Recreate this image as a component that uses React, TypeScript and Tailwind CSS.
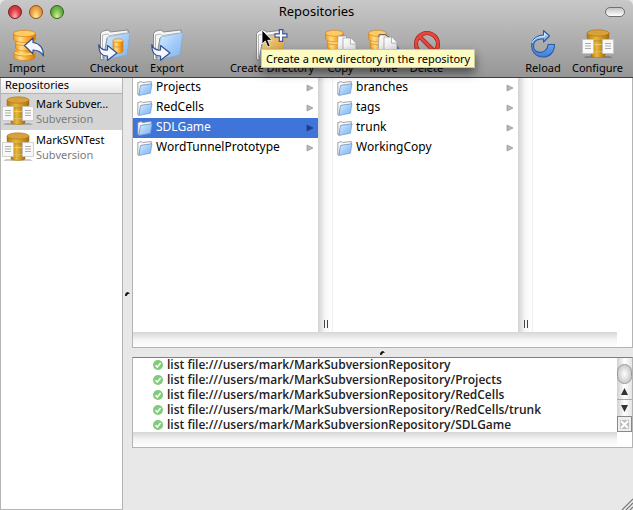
import { useState, type ReactNode } from 'react'
import clsx from 'clsx'

const repositories = [
  { name: 'Mark Subver…', kind: 'Subversion' },
  { name: 'MarkSVNTest', kind: 'Subversion' },
]

const rootFolders = ['Projects', 'RedCells', 'SDLGame', 'WordTunnelPrototype']
const subFolders = ['branches', 'tags', 'trunk', 'WorkingCopy']

const logLines = [
  'list file:///users/mark/MarkSubversionRepository',
  'list file:///users/mark/MarkSubversionRepository/Projects',
  'list file:///users/mark/MarkSubversionRepository/RedCells',
  'list file:///users/mark/MarkSubversionRepository/RedCells/trunk',
  'list file:///users/mark/MarkSubversionRepository/SDLGame',
]

// Gradients shared by all the icons
function Gradients() {
  return (
    <svg className="absolute size-0" aria-hidden="true">
      <defs>
        <linearGradient id="gold">
          <stop offset="0" stopColor="#f39a1c" />
          <stop offset=".3" stopColor="#ffe08a" />
          <stop offset=".6" stopColor="#fbb034" />
          <stop offset="1" stopColor="#d97706" />
        </linearGradient>
        <linearGradient id="brass">
          <stop offset="0" stopColor="#b47a10" />
          <stop offset=".4" stopColor="#e6b93a" />
          <stop offset=".65" stopColor="#d09a28" />
          <stop offset="1" stopColor="#a86c0c" />
        </linearGradient>
        <linearGradient id="sky" x1="0" y1="0" x2="1" y2="1">
          <stop offset="0" stopColor="#dcefff" />
          <stop offset=".5" stopColor="#a4cdf8" />
          <stop offset="1" stopColor="#7fb2ee" />
        </linearGradient>
        <linearGradient id="amber" x1="0" y1="0" x2="1" y2="1">
          <stop offset="0" stopColor="#f7dc94" />
          <stop offset="1" stopColor="#d3922c" />
        </linearGradient>
        <linearGradient id="steel" x1="0" y1="0" x2="0" y2="1">
          <stop offset="0" stopColor="#9fcbf4" />
          <stop offset="1" stopColor="#3f7fdc" />
        </linearGradient>
        <linearGradient id="paper" x1="0" y1="0" x2="1" y2="1">
          <stop offset="0" stopColor="#ffffff" />
          <stop offset="1" stopColor="#d4d4d4" />
        </linearGradient>
      </defs>
    </svg>
  )
}

function Coins() {
  return (
    <g stroke="#c9780c" strokeWidth=".6">
      <path d="M5 24v4c0 2 4.500 3.500 10.500 3.500S26 30 26 28v-4z" fill="url(#gold)" />
      <ellipse cx="15.500" cy="24" rx="10.500" ry="3" fill="#ffd577" />
      <path d="M7 17h17v6c-3 2-14 2-17 0z" fill="url(#gold)" stroke="none" />
      <path d="M6.500 14v4.500c0 2 4 3.500 9.500 3.500s9.500-1.500 9.500-3.500V14z" fill="url(#gold)" />
      <ellipse cx="16" cy="14" rx="9.500" ry="2.500" fill="#ffd577" />
      <path d="M4.500 4.500V10c0 2 5 3.500 11 3.500s11-1.500 11-3.500V4.500z" fill="url(#gold)" />
      <ellipse cx="15.500" cy="4.500" rx="11" ry="3.200" fill="#ffcb62" />
    </g>
  )
}

function ImportIcon() {
  return (
    <svg className="h-8 w-9" viewBox="0 0 36 32">
      <Coins />
      <path d="M15.500 16.500 24 9v4.500c7 1 10.500 5 10.500 13.500C32 22.500 29 21 24 21v4z" fill="#f4f7fd" stroke="#37508f" strokeWidth="1.200" strokeLinejoin="round" />
    </svg>
  )
}

function OpenFolder({ fill = 'url(#sky)' }: { fill?: string }) {
  return (
    <g strokeLinejoin="round">
      <path d="M2.500 30V4.500L5 2l5-1 2.500 2L30 1v5L9 9 5 31z" fill="#f7f7f7" stroke="#777" strokeWidth=".8" />
      <path d="M4.500 29V6l5-1 2 1.500L28 4" fill="none" stroke="#999" strokeWidth=".7" />
      <path d="M9.500 8 32 3.500 29 26 6 31z" fill={fill} stroke="#7fa3c8" strokeWidth=".6" />
    </g>
  )
}

function OutArrow() {
  return (
    <path d="M.8 15.500c1.500 4.500 4 6 8.700 5.500v-4.500L19 24l-9.500 7.300V27C3.500 27 .8 23.500.8 15.500z" fill="#f4f7fd" stroke="#37508f" strokeWidth="1.200" strokeLinejoin="round" />
  )
}

function CheckoutIcon() {
  return (
    <svg className="h-8 w-8" viewBox="0 0 32 32">
      <OpenFolder />
      <g stroke="#d9820f" strokeWidth=".6">
        <path d="M15 11.500V22c0 3 10 3 10 0V11.500z" fill="url(#gold)" />
        <ellipse cx="20" cy="11.500" rx="5" ry="1.800" fill="#ffd577" />
        <path d="M15 16.500c1 2 9 2 10 0" fill="none" />
      </g>
      <OutArrow />
    </svg>
  )
}

function ExportIcon() {
  return (
    <svg className="h-8 w-8" viewBox="0 0 32 32">
      <OpenFolder />
      <OutArrow />
    </svg>
  )
}

function NewFolderIcon() {
  return (
    <svg className="h-8 w-9" viewBox="0 0 36 32">
      <OpenFolder fill="url(#amber)" />
      <path d="M25.300.7h3.400v4.100H33v3.400h-4.300v4.100h-3.400V8.200H21V4.800h4.300z" fill="#fff" stroke="#3b559c" strokeWidth="1.200" />
    </svg>
  )
}

function Pages() {
  return (
    <g fill="url(#paper)" stroke="#999" strokeWidth=".7" strokeLinejoin="round">
      <path d="M13 7h8l5 6v16H12z" />
      <path d="M17 7h4.500v4H25" fill="#fff" />
      <path d="M18 9h8l5 6v15H18z" />
      <path d="M25.500 9v6H31" fill="#fff" />
    </g>
  )
}

function CopyIcon() {
  return (
    <svg className="h-8 w-8" viewBox="0 0 32 32">
      <g transform="translate(-3 0) scale(.8 .95)"><Coins /></g>
      <Pages />
    </svg>
  )
}

function MoveIcon() {
  return (
    <svg className="h-8 w-8" viewBox="0 0 32 32">
      <g transform="translate(-3 0) scale(.8 .95)"><Coins /></g>
      <path d="M28 17c3 3 3 6 1 11" fill="none" stroke="#4b6cb0" strokeWidth="3" />
      <g transform="translate(-2 -1)"><Pages /></g>
      <path d="M11 8V5.500h6L21 8" fill="none" stroke="#666" strokeWidth="1" />
    </svg>
  )
}

function DeleteIcon() {
  return (
    <svg className="h-8 w-8" viewBox="0 0 32 32" fill="none">
      <circle cx="16" cy="15" r="11" stroke="#a31616" strokeWidth="4" />
      <path d="m8.500 7.500 15 15" stroke="#a31616" strokeWidth="4" />
      <circle cx="16" cy="15" r="11" stroke="#e4473e" strokeWidth="2.800" />
      <path d="m8.500 7.500 15 15" stroke="#e4473e" strokeWidth="2.800" />
    </svg>
  )
}

function ReloadIcon() {
  return (
    <svg className="h-8 w-8" viewBox="0 0 32 32">
      <path d="M16.500 6V1.500L22.500 7l-6 6v-3C8.500 9.500 6.500 13 6.500 17c0 9 14.500 8.500 14.500-1.500h6.500C27.500 23.500 22.500 28 16 28 1 27.500.5 6.500 16.500 6z" fill="url(#steel)" stroke="#2c5aa8" strokeWidth="1.100" strokeLinejoin="round" />
      <path d="M5 14C7 9.500 11 7.500 17.500 7.500V4L20.500 7" fill="none" stroke="#dceefd" strokeWidth="1" />
    </svg>
  )
}

function RepositoryIcon() {
  return (
    <svg className="h-8 w-8 shrink-0" viewBox="0 0 32 32">
      <path d="m1 29 3-2h6l2 2zM20 29l2-2h6l3 2z" fill="#000" opacity=".2" />
      <g stroke="#9a6a12" strokeWidth=".5">
        <path d="M9 21h14v6c-1 2-13 2-14 0z" fill="url(#brass)" />
        <path d="M9 9v12c2 2 12 2 14 0V9z" fill="url(#brass)" />
        <path d="M9 14.500c2 1.500 12 1.500 14 0" fill="none" stroke="#fff3b0" />
        <path d="M9 21.500c2 1.500 12 1.500 14 0" fill="none" stroke="#fff3b0" />
        <path d="M5 4V9c0 4 22 4 22 0V4z" fill="url(#brass)" />
        <ellipse cx="16" cy="4" rx="11" ry="3.200" fill="#d9a03c" />
      </g>
      <path d="M.5 10.500h11v14H.5zM20.500 10.500h11v14h-11z" fill="#f9f9f9" stroke="#c4c4c4" strokeWidth=".8" />
      <path d="M3 14.500h6M3 17h6M3 19.500h6M23 14.500h6M23 17h6M23 19.500h6" stroke="#999" strokeWidth=".8" />
    </svg>
  )
}

function FolderIcon() {
  return (
    <svg className="size-4 shrink-0" viewBox="0 0 16 16" strokeLinejoin="round">
      <path d="M.8 14.500V2.600l3.400-1 1.300.9 8.700-1 .3 2.500L4 5.500 1.800 15z" fill="#f8f8f8" stroke="#8a8a8a" strokeWidth=".8" />
      <path d="M3.500 5.500 15 3.800l-1.600 9.400-11.500 2.300z" fill="url(#sky)" stroke="#6b9bd0" strokeWidth=".7" />
    </svg>
  )
}

type ToolProps = { label: string; icon: ReactNode; className: string; children?: ReactNode }

function Tool({ label, icon, className, children }: ToolProps) {
  return (
    <button className={clsx('relative flex shrink-0 flex-col items-center', className)}>
      {icon}
      <span className="text-[11px] leading-[14px] whitespace-nowrap">{label}</span>
      {children}
    </button>
  )
}

function FolderColumn({ items, initial }: { items: string[]; initial?: string }) {
  const [selected, setSelected] = useState(initial)
  return (
    <ul className="w-[185px] shrink-0">
      {items.map(item => (
        <li key={item}>
          <button
            onClick={() => setSelected(item)}
            className={clsx('flex h-5 w-full items-center gap-[3px] px-1 text-left text-[12px]', selected === item && 'bg-[#3f74d8] text-white')}
          >
            <FolderIcon />
            <span className="flex-1 pb-[2px] leading-4">{item}</span>
            <svg className="size-2" viewBox="0 0 8 8">
              <path d="M1 1 7 4 1 7z" fill={selected === item ? '#1d3c85' : '#b8b8b8'} stroke={selected === item ? '#1d3c85' : '#949494'} strokeWidth=".7" />
            </svg>
          </button>
        </li>
      ))}
    </ul>
  )
}

function ColumnGrip() {
  return (
    <div className="flex w-[15px] shrink-0 items-end justify-center border-r border-[#f0f0f0] bg-linear-to-r from-[#d2d2d2] via-[#f7f7f7] to-white pb-1 pl-px">
      <div className="h-2 w-1 border-x border-[#444]" />
    </div>
  )
}

function SplitMark() {
  return (
    <svg className="h-1 w-[5px]" viewBox="0 0 5 4">
      <path d="M0 4C0 1 1.500 0 3 0l2 1.500-2 .5-1.500 2z" fill="#111" />
    </svg>
  )
}

function ScrollTrack() {
  return <div className="mr-[15px] h-[15px] shrink-0 bg-linear-to-b from-[#d6d6d6] via-[#f4f4f4] to-white" />
}

function TitleBar() {
  return (
    <div className="flex h-6 items-center justify-between px-2">
      <div className="flex w-14 gap-[7px]">
        <button aria-label="Close" className="size-[14px] rounded-full border border-[#7d1a1e] bg-radial-[at_50%_90%] from-[#ffb4b4] via-[#e0434c] to-[#b3202b]" />
        <button aria-label="Minimize" className="size-[14px] rounded-full border border-[#8b5518] bg-radial-[at_50%_90%] from-[#fff0a0] via-[#efa94a] to-[#c9752a]" />
        <button aria-label="Zoom" className="size-[14px] rounded-full border border-[#35661c] bg-radial-[at_50%_90%] from-[#d8f79a] via-[#79bb4c] to-[#3f852a]" />
      </div>
      <h1 className="pb-[2px] text-[13px] leading-5">Repositories</h1>
      <div className="flex w-14 justify-end">
        <button aria-label="Toggle toolbar" className="h-[10px] w-5 rounded-full border border-[#707070] bg-linear-to-b from-[#c4c4c4] to-white" />
      </div>
    </div>
  )
}

function Toolbar() {
  return (
    <div className="flex px-[9px] pt-[5px]">
      <Tool label="Import" icon={<ImportIcon />} className="w-9" />
      <div className="ml-11 flex gap-2">
        <Tool label="Checkout" icon={<CheckoutIcon />} className="w-[50px]" />
        <Tool label="Export" icon={<ExportIcon />} className="w-10" />
      </div>
      <div className="ml-[42px] flex">
        <Tool label="Create Directory" icon={<NewFolderIcon />} className="mr-1 w-[86px]">
          <svg className="absolute top-0 left-8 z-20 h-5 w-3" viewBox="0 0 12 20">
            <path d="M1 1v14l3.300-3 2.500 6 2.400-1-2.500-5.700h4.300z" fill="#000" stroke="#fff" strokeWidth=".8" />
          </svg>
          <span role="tooltip" className="absolute top-5 left-8 z-10 border border-[#c9c99a] bg-[#fbfbc3] px-1 text-[11px] leading-[17px] whitespace-nowrap shadow-[0_5px_10px_rgba(0,0,0,0.5)]">
            Create a new directory in the repository
          </span>
        </Tool>
        <Tool label="Copy" icon={<CopyIcon />} className="w-[43px]" />
        <Tool label="Move" icon={<MoveIcon />} className="w-[43px]" />
        <Tool label="Delete" icon={<DeleteIcon />} className="w-[43px]" />
      </div>
      <div className="ml-auto flex gap-2">
        <Tool label="Reload" icon={<ReloadIcon />} className="w-10" />
        <Tool label="Configure" icon={<RepositoryIcon />} className="w-[53px]" />
      </div>
    </div>
  )
}

function Sidebar() {
  const [active, setActive] = useState(0)
  return (
    <aside className="w-[123px] shrink-0 border-x border-b border-[#b4b4b4] bg-white">
      <h2 className="h-4 border-b border-[#b4b4b4] bg-linear-to-b from-white via-[#f4f4f4] to-[#e6e6e6] px-1 text-[11px] leading-[14px]">Repositories</h2>
      {repositories.map((repo, i) => (
        <button
          key={repo.name}
          onClick={() => setActive(i)}
          className={clsx('flex h-9 w-full items-center gap-[2px] px-px text-left', active === i && 'bg-[#d4d4d4]')}
        >
          <RepositoryIcon />
          <span className="pb-[2px] text-[11px] leading-[15px] whitespace-nowrap">
            <span className="block">{repo.name}</span>
            <span className="block text-[#7c7c7c]">{repo.kind}</span>
          </span>
        </button>
      ))}
    </aside>
  )
}

function LogScroller() {
  return (
    <div className="flex w-[15px] shrink-0 flex-col bg-linear-to-r from-[#d0d0d0] via-white to-[#e4e4e4]">
      <div className="mt-[6px] h-5 rounded-full border border-[#9a9a9a] bg-radial from-white to-[#b8b8b8]" />
      <button aria-label="Scroll up" className="flex h-4 items-center justify-center border-b border-[#aaa]">
        <svg className="size-[7px]" viewBox="0 0 7 7"><path d="M3.500 0 7 7H0z" fill="#333" /></svg>
      </button>
      <button aria-label="Scroll down" className="flex h-4 items-center justify-center">
        <svg className="size-[7px]" viewBox="0 0 7 7"><path d="M0 0h7L3.500 7z" fill="#333" /></svg>
      </button>
      <button aria-label="Clear log" className="flex flex-1 items-center justify-center border border-[#888] bg-[#eee]">
        <svg className="size-[9px]" viewBox="0 0 9 9"><path d="M0 0h9v9H0z" fill="#bdbdbd" /><path d="m1 1 7 7M8 1 1 8" stroke="#fff" strokeWidth="2" /></svg>
      </button>
    </div>
  )
}

export default function App() {
  return (
    <div className="flex min-h-screen flex-col overflow-hidden bg-[#e8e8e8] font-['Lucida_Grande','Noto_Sans',sans-serif] text-black">
      <Gradients />
      <header className="relative z-10 h-[78px] shrink-0 rounded-t-md border-b border-[#404040] bg-linear-to-b from-[#c8c8c8] to-[#969696]">
        <TitleBar />
        <Toolbar />
      </header>
      <main className="flex flex-1">
        <Sidebar />
        <div className="flex w-[9px] shrink-0 items-center justify-center">
          <SplitMark />
        </div>
        <div className="flex min-w-0 flex-1 flex-col">
          <section className="flex flex-1 flex-col border-x border-b border-[#b4b4b4] bg-white">
            <div className="flex flex-1 overflow-hidden">
              <FolderColumn items={rootFolders} initial="SDLGame" />
              <ColumnGrip />
              <FolderColumn items={subFolders} />
              <ColumnGrip />
            </div>
            <ScrollTrack />
          </section>
          <div className="flex h-[9px] shrink-0 items-center justify-center">
            <SplitMark />
          </div>
          <section className="border border-t-[#808080] border-[#b4b4b4] bg-white">
            <div className="flex h-[74px]">
              <ul className="flex flex-1 flex-col justify-end overflow-hidden pl-5">
                {logLines.map(line => (
                  <li key={line} className="flex h-[15px] shrink-0 items-center gap-1 font-['Open_Sans',sans-serif] text-[12px] leading-[13px] font-semibold whitespace-nowrap text-[#222]">
                    <svg className="size-[10px]" viewBox="0 0 10 10">
                      <circle cx="5" cy="5" r="5" fill="#7fcc7a" />
                      <path d="m2.500 5.200 1.800 1.900L7.600 3" fill="none" stroke="#fff" strokeWidth="1.500" />
                    </svg>
                    {line}
                  </li>
                ))}
              </ul>
              <LogScroller />
            </div>
            <ScrollTrack />
          </section>
          <footer className="flex h-[62px] items-end justify-end">
            <svg className="size-3" viewBox="0 0 12 12">
              <path d="M1 12 12 1M5 12l7-7M9 12l3-3" stroke="#777" strokeWidth="1.100" />
            </svg>
          </footer>
        </div>
      </main>
    </div>
  )
}
